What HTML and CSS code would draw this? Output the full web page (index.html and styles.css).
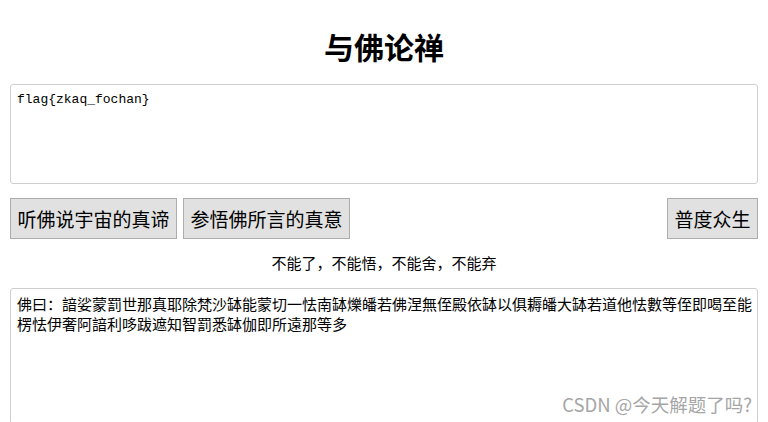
FILE: index.html
```html
<!DOCTYPE html>
<html lang="zh">
<head>
    <meta charset="UTF-8">
    <meta name="viewport" content="width=device-width, initial-scale=1.0">
    <title>与佛论禅</title>
    <link rel="stylesheet" href="styles.css">
</head>
<body>
    <div class="wrap">
        <h1 class="title">与佛论禅</h1>

        <!-- 明文 -->
        <textarea class="plain">flag{zkaq_fochan}</textarea>

        <div class="btn-row">
            <button class="btn">听佛说宇宙的真谛</button>
            <button class="btn">参悟佛所言的真意</button>
            <button class="btn btn-right">普度众生</button>
        </div>

        <p class="tip">不能了，不能悟，不能舍，不能弃</p>

        <!-- 佛曰 -->
        <textarea class="cipher">佛曰：諳娑蒙罰世那真耶除梵沙缽能蒙切一怯南缽爍皤若佛涅無侄殿依缽以俱耨皤大缽若道他怯數等侄即喝至能楞怯伊奢阿諳利哆跋遮知智罰悉缽伽即所遠那等多</textarea>
    </div>

    <div class="mark">CSDN @今天解题了吗?</div>
</body>
</html>
```

FILE: styles.css
```css
body{
    margin: 0;
    font-family: "Noto Sans CJK SC", "Liberation Sans", sans-serif;
    color: #000;
    background: #fff;
    overflow: hidden;
}

.wrap{
    padding: 0 10px;
}

.title{
    margin: 0 0 18px;
    padding-top: 26px;
    font-size: 30px;
    line-height: 40px;
    font-weight: bold;
    text-align: center;
}

textarea{
    display: block;
    width: 100%;
    box-sizing: border-box;
    border: 1px solid #cfcfcf;
    border-radius: 3px;
    resize: none;
    outline: none;
    margin: 0;
}

.plain{
    height: 100px;
    padding: 7px 6px;
    font-family: "Liberation Mono", "DejaVu Sans Mono", monospace;
    font-size: 13px;
    line-height: 16px;
}

.btn-row{
    display: flex;
    gap: 6px;
    margin-top: 14px;
}

.btn{
    height: 41px;
    padding: 0 6.5px;
    border: 1px solid #adadad;
    background: #e1e1e1;
    font-family: "Noto Sans CJK SC", sans-serif;
    font-size: 19px;
    color: #000;
    border-radius: 0;
}

.btn-right{
    margin-left: auto;
}

.tip{
    margin: 14px 0 15px;
    font-size: 15px;
    line-height: 20px;
    text-align: center;
}

.cipher{
    height: 136px;
    padding: 5px 4px 6px 6px;
    font-family: "Noto Sans CJK SC", sans-serif;
    font-size: 15px;
    line-height: 20px;
}

.mark{
    position: absolute;
    right: 16px;
    bottom: 5px;
    font-family: "Noto Sans CJK SC", "Liberation Sans", sans-serif;
    font-size: 18.5px;
    color: #a6a6a6;
}
```
